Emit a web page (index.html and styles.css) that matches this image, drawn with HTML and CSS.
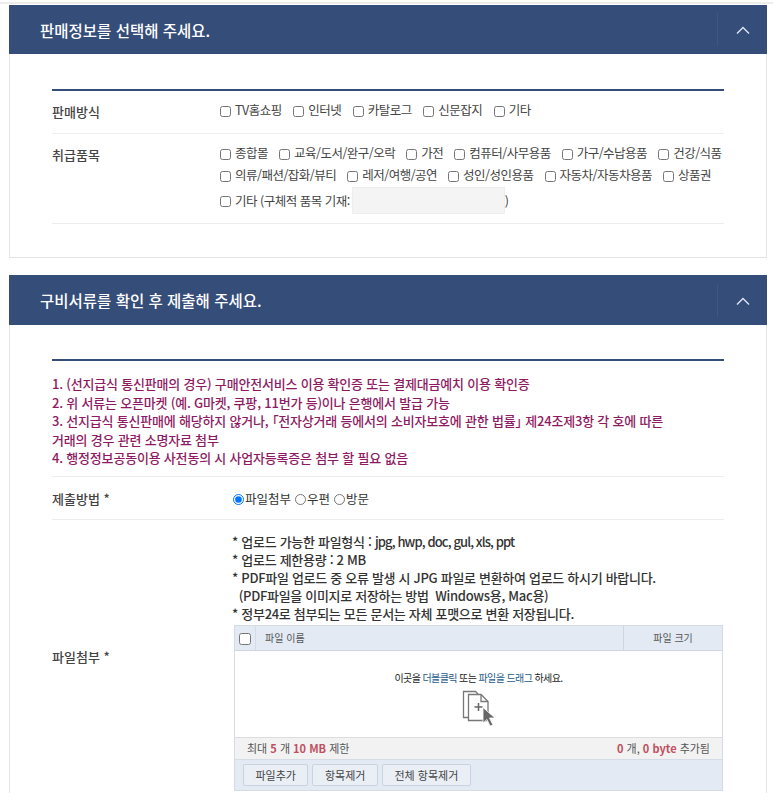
FILE: index.html
```html
<!DOCTYPE html>
<html lang="ko">
<head>
  <meta charset="UTF-8">
  <meta name="viewport" content="width=device-width, initial-scale=1.0">
  <title>판매정보 및 구비서류 제출</title>
  <link rel="stylesheet" href="styles.css">
</head>
<body>

<!-- 판매정보 -->
<section class="panel panel-sales">
  <div class="panel-head">
    <h2>판매정보를 선택해 주세요.</h2>
    <button class="toggle" aria-label="접기">
      <svg width="14" height="8" viewBox="0 0 14 8"><polyline points="1,7.5 7,1.5 13,7.5" fill="none" stroke="#dfe6f2" stroke-width="1.4"/></svg>
    </button>
  </div>
  <div class="panel-body">
    <div class="form-table">
      <div class="row row-method">
        <div class="label">판매방식</div>
        <div class="checks">
          <label><input type="checkbox">TV홈쇼핑</label>
          <label><input type="checkbox">인터넷</label>
          <label><input type="checkbox">카탈로그</label>
          <label><input type="checkbox">신문잡지</label>
          <label><input type="checkbox">기타</label>
        </div>
      </div>
      <div class="row row-items">
        <div class="label">취급품목</div>
        <div class="checks checks-items">
          <label><input type="checkbox">종합몰</label>
          <label><input type="checkbox">교육/도서/완구/오락</label>
          <label><input type="checkbox">가전</label>
          <label><input type="checkbox">컴퓨터/사무용품</label>
          <label><input type="checkbox">가구/수납용품</label>
          <label><input type="checkbox">건강/식품</label>
          <label><input type="checkbox">의류/패션/잡화/뷰티</label>
          <label><input type="checkbox">레저/여행/공연</label>
          <label><input type="checkbox">성인/성인용품</label>
          <label><input type="checkbox">자동차/자동차용품</label>
          <label><input type="checkbox">상품권</label>
          <label class="etc"><input type="checkbox">기타 (구체적 품목 기재: <input type="text" class="etc-input" disabled>)</label>
        </div>
      </div>
    </div>
  </div>
</section>

<!-- 구비서류 -->
<section class="panel panel-docs">
  <div class="panel-head">
    <h2>구비서류를 확인 후 제출해 주세요.</h2>
    <button class="toggle" aria-label="접기">
      <svg width="14" height="8" viewBox="0 0 14 8"><polyline points="1,7.5 7,1.5 13,7.5" fill="none" stroke="#dfe6f2" stroke-width="1.4"/></svg>
    </button>
  </div>
  <div class="panel-body">
    <div class="form-table">
      <div class="notice">
        <p>1. (선지급식 통신판매의 경우) 구매안전서비스 이용 확인증 또는 결제대금예치 이용 확인증</p>
        <p>2. 위 서류는 오픈마켓 (예. G마켓, 쿠팡, 11번가 등)이나 은행에서 발급 가능</p>
        <p>3. 선지급식 통신판매에 해당하지 않거나, <span class="pun">「</span>전자상거래 등에서의 소비자보호에 관한 법률<span class="pun">」</span> 제24조제3항 각 호에 따른</p>
        <p>거래의 경우 관련 소명자료 첨부</p>
        <p>4. 행정정보공동이용 사전동의 시 사업자등록증은 첨부 할 필요 없음</p>
      </div>
      <div class="row row-submit">
        <div class="label">제출방법 *</div>
        <div class="radios">
          <label><input type="radio" name="submit" checked>파일첨부</label>
          <label><input type="radio" name="submit">우편</label>
          <label><input type="radio" name="submit">방문</label>
        </div>
      </div>
      <div class="row row-file">
        <div class="label">파일첨부 *</div>
        <div class="file-cell">
          <ul class="file-notes">
            <li>* 업로드 가능한 파일형식 : <span class="latin">jpg, hwp, doc, gul, xls, ppt</span></li>
            <li>* 업로드 제한용량 : 2 MB</li>
            <li>* PDF파일 업로드 중 오류 발생 시 JPG 파일로 변환하여 업로드 하시기 바랍니다.</li>
            <li>&nbsp;&nbsp;(PDF파일을 이미지로 저장하는 방법 &nbsp;Windows용, Mac용)</li>
            <li>* 정부24로 첨부되는 모든 문서는 자체 포맷으로 변환 저장됩니다.</li>
          </ul>
          <div class="uploader">
            <div class="up-head">
              <div class="up-check"><input type="checkbox"></div>
              <div class="up-name">파일 이름</div>
              <div class="up-size">파일 크기</div>
            </div>
            <div class="up-drop">
              <p>이곳을 <span class="blue">더블클릭</span> 또는 <span class="blue">파일을 드래그</span> 하세요.</p>
              <svg width="34" height="36" viewBox="0 0 34 36">
                <path d="M7 27.5H1.5V1.5H13.5L16 4" fill="none" stroke="#777" stroke-width="1.3"/>
                <path d="M6.5 4.5H19L26 11.5V30.5H6.5Z" fill="#fff" stroke="#777" stroke-width="1.3"/>
                <path d="M19 4.5V11.5H26" fill="none" stroke="#777" stroke-width="1.3"/>
                <path d="M16.5 13V21M12.5 17H20.5" fill="none" stroke="#666" stroke-width="1.5"/>
                <path d="M21 17.5L33 28H27.5L31 35L28 36L25 29.5L21 33Z" fill="#666" stroke="#fff" stroke-width="0.8"/>
              </svg>
            </div>
            <div class="up-info">
              <div>최대 <b>5</b> 개 <b>10 MB</b> 제한</div>
              <div><b>0</b> 개, <b>0 byte</b> 추가됨</div>
            </div>
            <div class="up-buttons">
              <button>파일추가</button>
              <button>항목제거</button>
              <button>전체 항목제거</button>
            </div>
          </div>
        </div>
      </div>
    </div>
  </div>
</section>

</body>
</html>
```

FILE: styles.css
```css
html, body {
  height: 793px;
  overflow: hidden;
}
body {
  margin: 0;
  padding-top: 2px;
  background-color: #fff;
  font-family: "Noto Sans CJK KR", "Noto Sans", sans-serif;
  font-size: 12px;
  color: #444;
  box-sizing: border-box;
}
body::before {
  content: "";
  display: block;
  height: 2px;
  background-color: #ececec;
}
.panel {
  margin: 1px 6px 0 9px;
  border: 1px solid #e4e4e4;
  border-top: 0;
}
.panel-sales {
  height: 252px;
}
.panel-docs {
  margin-top: 17px;
  border-bottom: 0;
}
.panel-head {
  height: 49px;
  margin: 0 -1px;
  padding-left: 31px;
  display: flex;
  align-items: center;
  justify-content: space-between;
  background-color: #354d79;
}
.panel-docs .panel-head {
  height: 50px;
}
.panel-head h2 {
  margin: 0;
  font-size: 15.5px;
  font-weight: 500;
  color: #fff;
}
.toggle {
  width: 50px;
  height: 33px;
  padding: 0;
  border: 0;
  border-left: 1px solid #3f5784;
  background: none;
}
.panel-body {
  padding: 35px 42px 0;
}
.panel-docs .panel-body {
  padding-top: 34px;
}
.form-table {
  border-top: 2px solid #354d79;
}
.row {
  display: flex;
  border-bottom: 1px solid #eee;
}
.label {
  flex: 0 0 168px;
  font-size: 13px;
  font-weight: 500;
  color: #444;
}
.row-method {
  height: 43px;
  padding-top: 9px;
  box-sizing: border-box;
}
.row-method .label {
  margin-top: 2px;
}
.row-items {
  height: 90px;
  padding-top: 9px;
  box-sizing: border-box;
}
.row-items .label {
  margin-top: 2px;
}
.checks {
  flex: 1;
  display: flex;
  flex-wrap: wrap;
  align-items: center;
  align-content: flex-start;
  column-gap: 11.5px;
  line-height: 20px;
  font-size: 12.5px;
}
.checks-items {
  column-gap: 11px;
  row-gap: 2px;
}
.checks label {
  display: flex;
  align-items: center;
  white-space: nowrap;
  letter-spacing: -0.5px;
}
.checks input[type="checkbox"] {
  width: 11px;
  height: 11px;
  margin: 2px 4px 0 0;
}
.etc {
  flex: 0 0 100%;
  height: 29px;
  margin-top: -1px;
}
.etc-input {
  width: 153px;
  height: 27px;
  margin-left: 2px;
  padding: 0;
  box-sizing: border-box;
  border: 1px solid #eee;
  background-color: #f4f4f4;
}
.notice {
  padding: 14px 0 8px;
  border-bottom: 1px solid #eee;
  font-size: 13px;
  font-weight: 500;
  line-height: 18.5px;
  color: #8e1a63;
  letter-spacing: -0.2px;
}
.notice p {
  margin: 0;
}
.pun {
  font-feature-settings: "palt";
}
.row-submit {
  height: 43px;
  padding-top: 1px;
  align-items: center;
  box-sizing: border-box;
}
.row-submit .label {
  flex-basis: 180px;
}
.radios {
  display: flex;
  font-size: 12.5px;
  color: #333;
}
.radios label {
  display: flex;
  align-items: center;
}
.radios input {
  width: 11px;
  height: 11px;
  margin: 2px 1px 0 1px;
}
.radios label + label {
  margin-left: 3px;
}
.row-file {
  align-items: center;
}
.row-file .label {
  flex-basis: 180px;
}
.file-cell {
  flex: 1;
  padding-top: 13px;
  padding-bottom: 2px;
}
.file-notes {
  margin: 0 0 1px;
  padding: 0;
  list-style: none;
  font-size: 13px;
  font-weight: 500;
  line-height: 18.2px;
  color: #333;
  letter-spacing: -0.3px;
}
.latin {
  letter-spacing: -0.9px;
}
.uploader {
  margin-left: 2px;
  width: 489px;
  border: 1px solid #d5dce6;
  box-sizing: border-box;
  font-size: 10px;
  color: #555;
}
.up-head {
  height: 24px;
  display: flex;
  align-items: center;
  background-color: #e3eaf4;
  border-bottom: 1px solid #cfd6e0;
}
.up-check {
  width: 20px;
  height: 100%;
  display: flex;
  align-items: center;
  justify-content: center;
  border-right: 1px solid #d5dce6;
}
.up-check input {
  width: 12px;
  height: 12px;
  margin: 2px 0 0;
}
.up-name {
  flex: 1;
  padding-left: 9px;
}
.up-size {
  width: 98px;
  height: 100%;
  display: flex;
  align-items: center;
  justify-content: center;
  border-left: 1px solid #cfd6e0;
}
.up-drop {
  height: 87px;
  display: flex;
  flex-direction: column;
  align-items: center;
  box-sizing: border-box;
  padding-top: 20px;
  border-bottom: 1px solid #ddd;
}
.up-drop p {
  margin: 0 0 5px;
  line-height: 14px;
  color: #222;
  letter-spacing: -0.6px;
}
.blue {
  color: #1d5a8a;
}
.up-info {
  height: 21px;
  padding: 0 12px;
  display: flex;
  align-items: center;
  justify-content: space-between;
  background-color: #f2f2f2;
  border-bottom: 1px solid #d5dce6;
  font-size: 11px;
}
.up-info b {
  color: #c0505f;
}
.up-buttons {
  height: 30px;
  padding: 4px 8px 0;
  box-sizing: border-box;
  display: flex;
  gap: 4px;
  background-color: #e3eaf4;
}
.up-buttons button {
  height: 22px;
  padding: 0 11.5px;
  border: 1px solid #cbd3de;
  border-radius: 2px;
  background-color: #eaeff6;
  font-family: inherit;
  font-size: 11px;
  color: #444;
}
```
